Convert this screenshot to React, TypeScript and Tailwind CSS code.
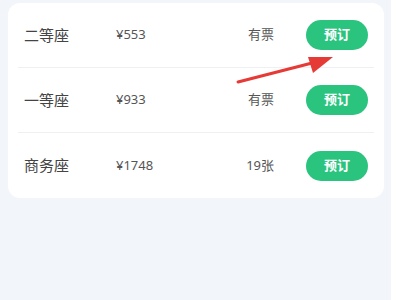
import React from "react";

const seats = [
  { name: "二等座", price: "¥553", stock: "有票" },
  { name: "一等座", price: "¥933", stock: "有票" },
  { name: "商务座", price: "¥1748", stock: "19张" },
];

export default function App() {
  return (
    <div
      className="relative flex w-[400px] h-[300px] bg-[#f2f5fa] overflow-hidden"
      style={{ fontFamily: '"Noto Sans", "Noto Sans CJK SC", sans-serif' }}
    >
      <div className="flex-1 pt-[3px] pl-[8px] pr-[7px]">
        <div className="bg-white rounded-[12px] px-[10px]">
          {seats.map((s, i) => (
            <div
              key={s.name}
              className={`flex items-center h-[65px] pl-[6px] pr-[6px] ${
                i < seats.length - 1 ? "border-b border-[#eef0f3]" : ""
              }`}
            >
              <div className="w-[92px] text-[15px] text-[#444]">{s.name}</div>
              <div className="flex-1 text-[13px] text-[#555]">{s.price}</div>
              <div className="text-[13px] text-[#555] mr-[32px]">{s.stock}</div>
              <button className="w-[62px] h-[30px] rounded-full bg-[#2bc47e] text-white text-[13px] font-semibold">
                预订
              </button>
            </div>
          ))}
        </div>
      </div>
      <div className="w-[9px] bg-white" />

      <svg
        className="absolute left-0 top-0"
        width="400"
        height="300"
        viewBox="0 0 400 300"
      >
        <line
          x1="238"
          y1="82"
          x2="316"
          y2="62"
          stroke="#e53a36"
          strokeWidth="3"
          strokeLinecap="round"
        />
        <polygon points="333,57 308,57 313,73" fill="#e53a36" />
      </svg>
    </div>
  );
}
